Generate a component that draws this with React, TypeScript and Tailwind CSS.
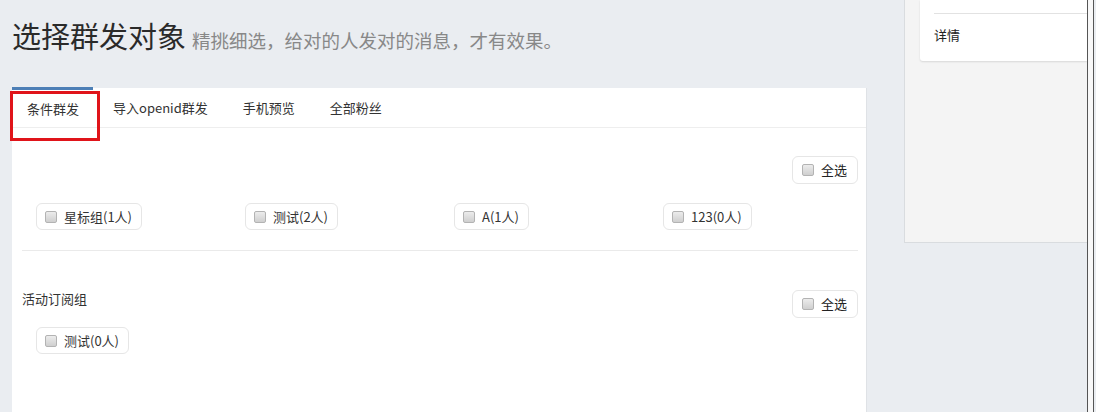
import React from 'react'

const font = { fontFamily: '"Microsoft YaHei", "Noto Sans CJK SC", "Liberation Sans", sans-serif' }

const Box = () => (
  <span className="inline-block w-[12px] h-[12px] rounded-[2px] border border-[#b3b3b3] bg-gradient-to-b from-[#ececec] to-[#cfcfcf]" />
)

const Check = ({ label }: { label: string }) => (
  <label className="inline-flex items-center h-[27px] pl-[8px] pr-[9px] gap-[7px] border border-[#e6e6e6] rounded-[6px] text-[13px] text-[#333] bg-white">
    <Box />
    <span>{label}</span>
  </label>
)

const SelectAll = () => (
  <label className="inline-flex items-center h-[28px] pl-[9px] pr-[10px] gap-[7px] border border-[#e6e6e6] rounded-[6px] text-[13px] text-[#222] bg-white">
    <Box />
    <span>全选</span>
  </label>
)

const App = () => {
  return (
    <div className="w-[1096px] h-[412px] overflow-hidden bg-[#eaedf1] flex" style={font}>
      <div className="w-[867px] pl-3 flex flex-col">
        <div className="h-[88px] flex items-end pb-[38px] gap-[6px]">
          <h1 className="text-[29px] leading-none text-[#2a2a2a]">选择群发对象</h1>
          <span className="text-[18.5px] leading-none text-[#888] mb-[1px]">精挑细选，给对的人发对的消息，才有效果。</span>
        </div>
        <div className="flex-1 bg-white border-r border-[#dfe2e6]">
          <div className="h-[40px] flex border-b border-[#eeeeee] text-[13px] text-[#333]">
            <div className="relative w-[81px] flex items-center pl-[15px] border-t-[3px] border-[#4d7fb6] -mt-[1px]">
              条件群发
              <div className="absolute left-[-2px] top-[1px] w-[90px] h-[50px] border-[3px] border-[#e0141a]" />
            </div>
            <div className="flex items-center ml-[20px]">导入openid群发</div>
            <div className="flex items-center ml-[35px]">手机预览</div>
            <div className="flex items-center ml-[35px]">全部粉丝</div>
          </div>
          <div className="pl-[10px] pr-[8px]">
            <div className="pt-[28px] pb-[20px] border-b border-[#eaeaea]">
              <div className="flex justify-end">
                <SelectAll />
              </div>
              <div className="grid grid-cols-4 mt-[19px]">
                <div className="pl-[14px]"><Check label="星标组(1人)" /></div>
                <div className="pl-[14px]"><Check label="测试(2人)" /></div>
                <div className="pl-[14px]"><Check label="A(1人)" /></div>
                <div className="pl-[14px]"><Check label="123(0人)" /></div>
              </div>
            </div>
            <div className="pt-[39px]">
              <div className="flex justify-between items-start">
                <span className="text-[13px] text-[#333] -mt-[1px]">活动订阅组</span>
                <SelectAll />
              </div>
              <div className="grid grid-cols-4 mt-[9px]">
                <div className="pl-[14px]"><Check label="测试(0人)" /></div>
              </div>
            </div>
          </div>
        </div>
      </div>
      <div className="ml-[37px] w-[183px] h-[243px] bg-[#f4f4f4] border-l border-b border-[#d9dcdf] pl-[15px]">
        <div className="h-[61px] bg-white rounded-bl-[3px] shadow-[0_1px_2px_rgba(0,0,0,0.12)] pl-[14px]">
          <div className="h-[14px] border-b border-[#e2e2e2]" />
          <div className="pt-[14px] text-[13px] text-[#222] leading-none">详情</div>
        </div>
      </div>
      <div className="w-[7px] h-full border-l border-r border-[#555] bg-[#f8f8f8]" />
    </div>
  )
}

export default App
